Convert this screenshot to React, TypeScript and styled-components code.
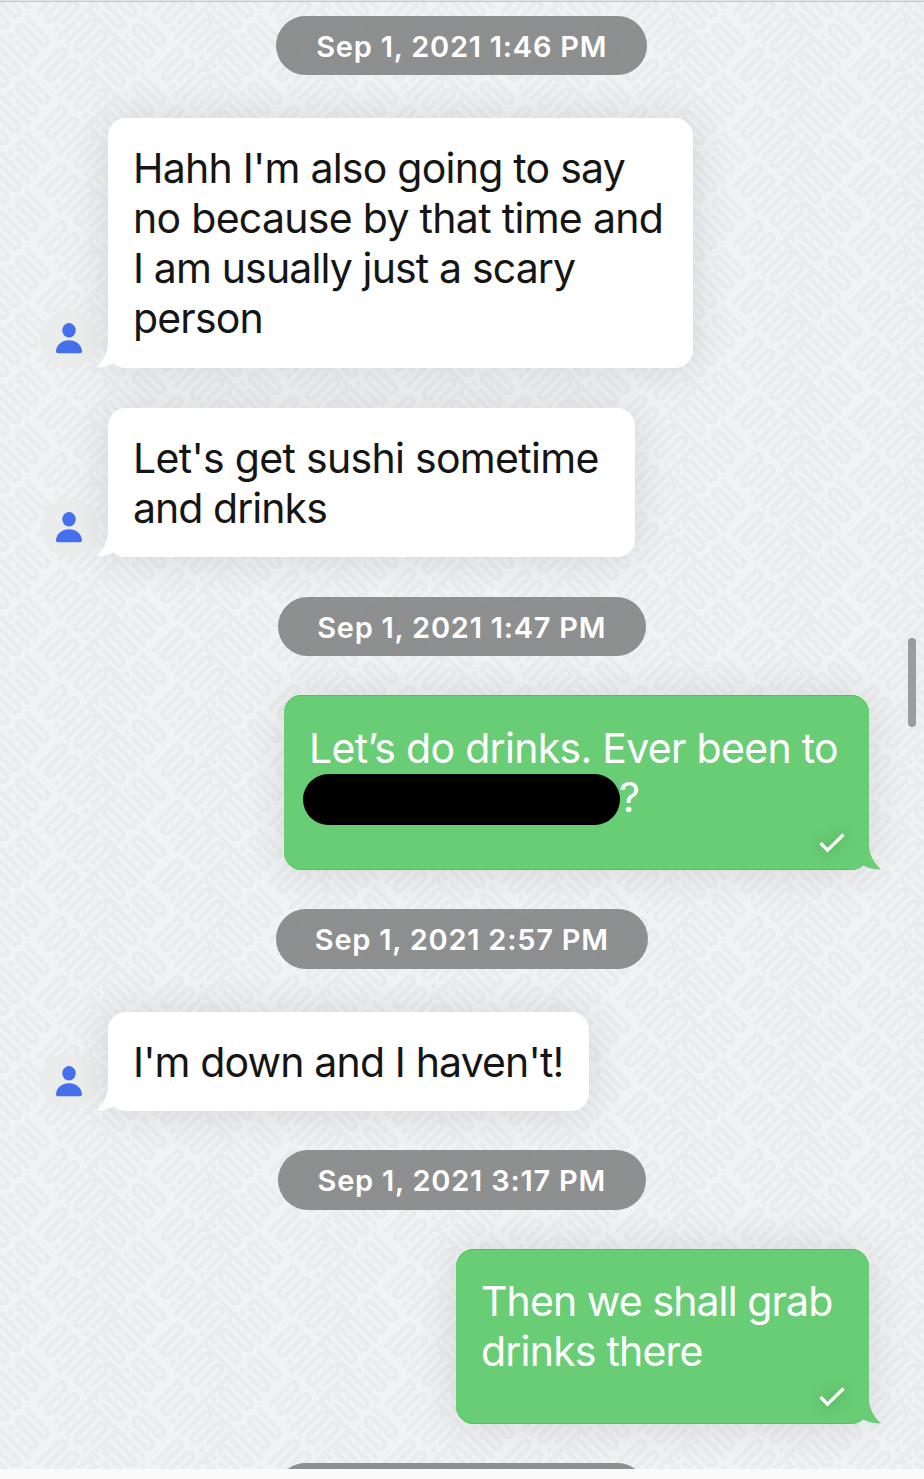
import React from "react";
import styled, { createGlobalStyle } from "styled-components";

const GlobalStyle = createGlobalStyle`
  * { box-sizing: border-box; }
  html, body { margin: 0; padding: 0; background: #fafafa; }
  body { font-family: Inter, "Liberation Sans", sans-serif; overflow: hidden; }
`;

const Screen = styled.main`
  position: relative;
  width: 924px;
  height: 1479px;
  display: flex;
  flex-direction: column;
  overflow: hidden;
`;

const TopEdge = styled.header`
  flex: none;
  height: 2px;
  background: #e0e1e1;
  border-bottom: 1px solid #c9cacb;
`;

const Thread = styled.section`
  position: relative;
  height: 1467px;
  flex: none;
  overflow: hidden;
  isolation: isolate;
  background: #f0f2f3;
  display: flex;
  flex-direction: column;
  padding-top: 13.5px;
`;

const Footer = styled.footer`
  flex: 1;
  background: #fafafa;
`;

const Wallpaper = styled.svg`
  position: absolute;
  inset: 0;
  width: 100%;
  height: 100%;
  z-index: -1;
`;

const Stamp = styled.time<{ $width: number; $gap: number }>`
  flex: none;
  align-self: center;
  width: ${(p) => p.$width}px;
  height: 59.5px;
  margin: ${(p) => p.$gap}px 0.5px 0 0;
  border-radius: 30px;
  background: rgba(118, 119, 119, 0.8);
  color: #fff;
  font-size: 29px;
  font-weight: 600;
  line-height: 61px;
  letter-spacing: 0.76px;
  text-align: center;
  white-space: nowrap;
`;

const Row = styled.article<{ $sent?: boolean; $gap: number }>`
  flex: none;
  display: flex;
  align-items: flex-end;
  justify-content: ${(p) => (p.$sent ? "flex-end" : "flex-start")};
  gap: 10px;
  margin-top: ${(p) => p.$gap}px;
  padding: 0 55px 0 40px;
`;

const Avatar = styled.div`
  width: 58px;
  height: 58px;
  border-radius: 50%;
  background: #ebedec;
  svg { display: block; }
`;

const Bubble = styled.div<{ $sent?: boolean; $width: number; $height: number }>`
  position: relative;
  width: ${(p) => p.$width}px;
  height: ${(p) => p.$height}px;
  padding: ${(p) => (p.$sent ? 28.5 : 26)}px 0 0 25px;
  border-radius: 18px;
  background: ${(p) => (p.$sent ? "#69cd75" : "#fff")};
  color: ${(p) => (p.$sent ? "#fff" : "#151515")};
  box-shadow: 0 1px 38px rgba(40, 44, 50, 0.12)${(p) =>
    p.$sent ? ", inset 0 1px #3bcf4a, inset 0 -1px #3bcf4a" : ""};
`;

const Line = styled.div<{ $spacing: number }>`
  display: flex;
  align-items: center;
  height: 49.9px;
  font-size: 41px;
  line-height: 49.9px;
  letter-spacing: ${(p) => p.$spacing}px;
  white-space: pre;
`;

const Redaction = styled.span`
  width: 317px;
  height: 51px;
  margin: 2px -1px 0 -6px;
  flex: none;
  border-radius: 26px;
  background: #000;
`;

const Tail = styled.svg<{ $sent?: boolean }>`
  position: absolute;
  bottom: 0;
  ${(p) => (p.$sent ? "right: -12px; transform: scaleX(-1);" : "left: -12px;")}
`;

const Check = styled.svg`
  position: absolute;
  right: 23px;
  bottom: 15px;
  filter: drop-shadow(0 0 7px rgba(0, 70, 10, 0.4));
`;

const ScrollThumb = styled.div`
  position: absolute;
  left: 908px;
  top: 638px;
  width: 8px;
  height: 89px;
  border-radius: 4px;
  background: #9b9c9c;
`;

function Person() {
  return (
    <Avatar>
      <svg width="58" height="58" viewBox="0 0 58 58" fill="#456feb">
        <ellipse cx="29" cy="20.3" rx="6.7" ry="7.2" />
        <path d="M18 43.2C16.5 43.2 15.8 42.4 16 41C16.6 34.6 22 30.3 29 30.3S41.4 34.6 42 41C42.2 42.4 41.5 43.2 40 43.2Z" />
      </svg>
    </Avatar>
  );
}

type MessageLine = { text: string; spacing: number; redacted?: boolean };
type MessageProps = {
  sent?: boolean;
  gap: number;
  width: number;
  height: number;
  lines: MessageLine[];
};

function Message({ sent, gap, width, height, lines }: MessageProps) {
  return (
    <Row $sent={sent} $gap={gap}>
      {!sent && <Person />}
      <Bubble $sent={sent} $width={width} $height={height}>
        {lines.map((line) => (
          <Line key={line.text} $spacing={line.spacing}>
            {line.redacted && <Redaction />}
            {line.text}
          </Line>
        ))}
        <Tail $sent={sent} width="32" height="26" viewBox="0 0 32 26" fill={sent ? "#69cd75" : "#fff"}>
          <path d="M12 0C12 10 8 18 0 25.5C7 25.5 13 24 18.5 21C21 24 25 26 30 26V0Z" />
        </Tail>
        {sent && (
          <Check width="28" height="24" viewBox="0 0 28 24" fill="none" stroke="#fff" strokeWidth="3.3">
            <path d="M2.5 12L9.5 19.2L25.5 3.5" />
          </Check>
        )}
      </Bubble>
    </Row>
  );
}

function Pattern() {
  return (
    <Wallpaper>
      <defs>
        <g id="meander" fill="none" stroke="#e9ebed" strokeWidth="4.6" strokeLinecap="round" strokeLinejoin="round">
          <path d="M-17-12.3H12A4.1 4.1 0 0 1 12-4.1H-12A4.1 4.1 0 0 0-12 4.1H12A4.1 4.1 0 0 1 12 12.3H-6" />
          <path d="M-20 20.5H18" />
          <path d="M-16 12.3H-14" />
        </g>
        <pattern id="weave" width="116" height="58" patternUnits="userSpaceOnUse" patternTransform="translate(1 7)">
          {[-58, 0, 58].map((y) =>
            [-116, 0, 116].map((x) => (
              <g key={`${x}:${y}`} transform={`translate(${x} ${y})`}>
                <use href="#meander" transform="rotate(45)" />
                <use href="#meander" transform="translate(29 29) rotate(45)" />
                <use href="#meander" transform="translate(58 0) rotate(-45)" />
                <use href="#meander" transform="translate(87 29) rotate(-45)" />
              </g>
            )),
          )}
        </pattern>
      </defs>
      <rect width="100%" height="100%" fill="url(#weave)" />
    </Wallpaper>
  );
}

export default function App() {
  return (
    <Screen>
      <GlobalStyle />
      <TopEdge />
      <Thread>
        <Pattern />
        <Stamp $width={371} $gap={0}>Sep 1, 2021 1:46 PM</Stamp>
        <Message
          gap={43}
          width={585}
          height={249.5}
          lines={[
            { text: "Hahh I'm also going to say", spacing: -0.76 },
            { text: "no because by that time and", spacing: -0.7 },
            { text: "I am usually just a scary", spacing: -0.86 },
            { text: "person", spacing: -0.85 },
          ]}
        />
        <Message
          gap={40.5}
          width={527}
          height={149}
          lines={[
            { text: "Let's get sushi sometime", spacing: -0.7 },
            { text: "and drinks", spacing: -0.95 },
          ]}
        />
        <Stamp $width={368.5} $gap={39.5}>Sep 1, 2021 1:47 PM</Stamp>
        <Message
          sent
          gap={39}
          width={585}
          height={175}
          lines={[
            { text: "Let’s do drinks. Ever been to", spacing: -0.7 },
            { text: "?", spacing: 0, redacted: true },
          ]}
        />
        <Stamp $width={372.5} $gap={39}>Sep 1, 2021 2:57 PM</Stamp>
        <Message
          gap={43}
          width={481}
          height={99}
          lines={[{ text: "I'm down and I haven't!", spacing: -0.85 }]}
        />
        <Stamp $width={368.5} $gap={39.5}>Sep 1, 2021 3:17 PM</Stamp>
        <Message
          sent
          gap={39.3}
          width={413}
          height={175}
          lines={[
            { text: "Then we shall grab", spacing: -0.9 },
            { text: "drinks there", spacing: -0.8 },
          ]}
        />
        <Stamp $width={371} $gap={39} />
      </Thread>
      <Footer />
      <ScrollThumb />
    </Screen>
  );
}
